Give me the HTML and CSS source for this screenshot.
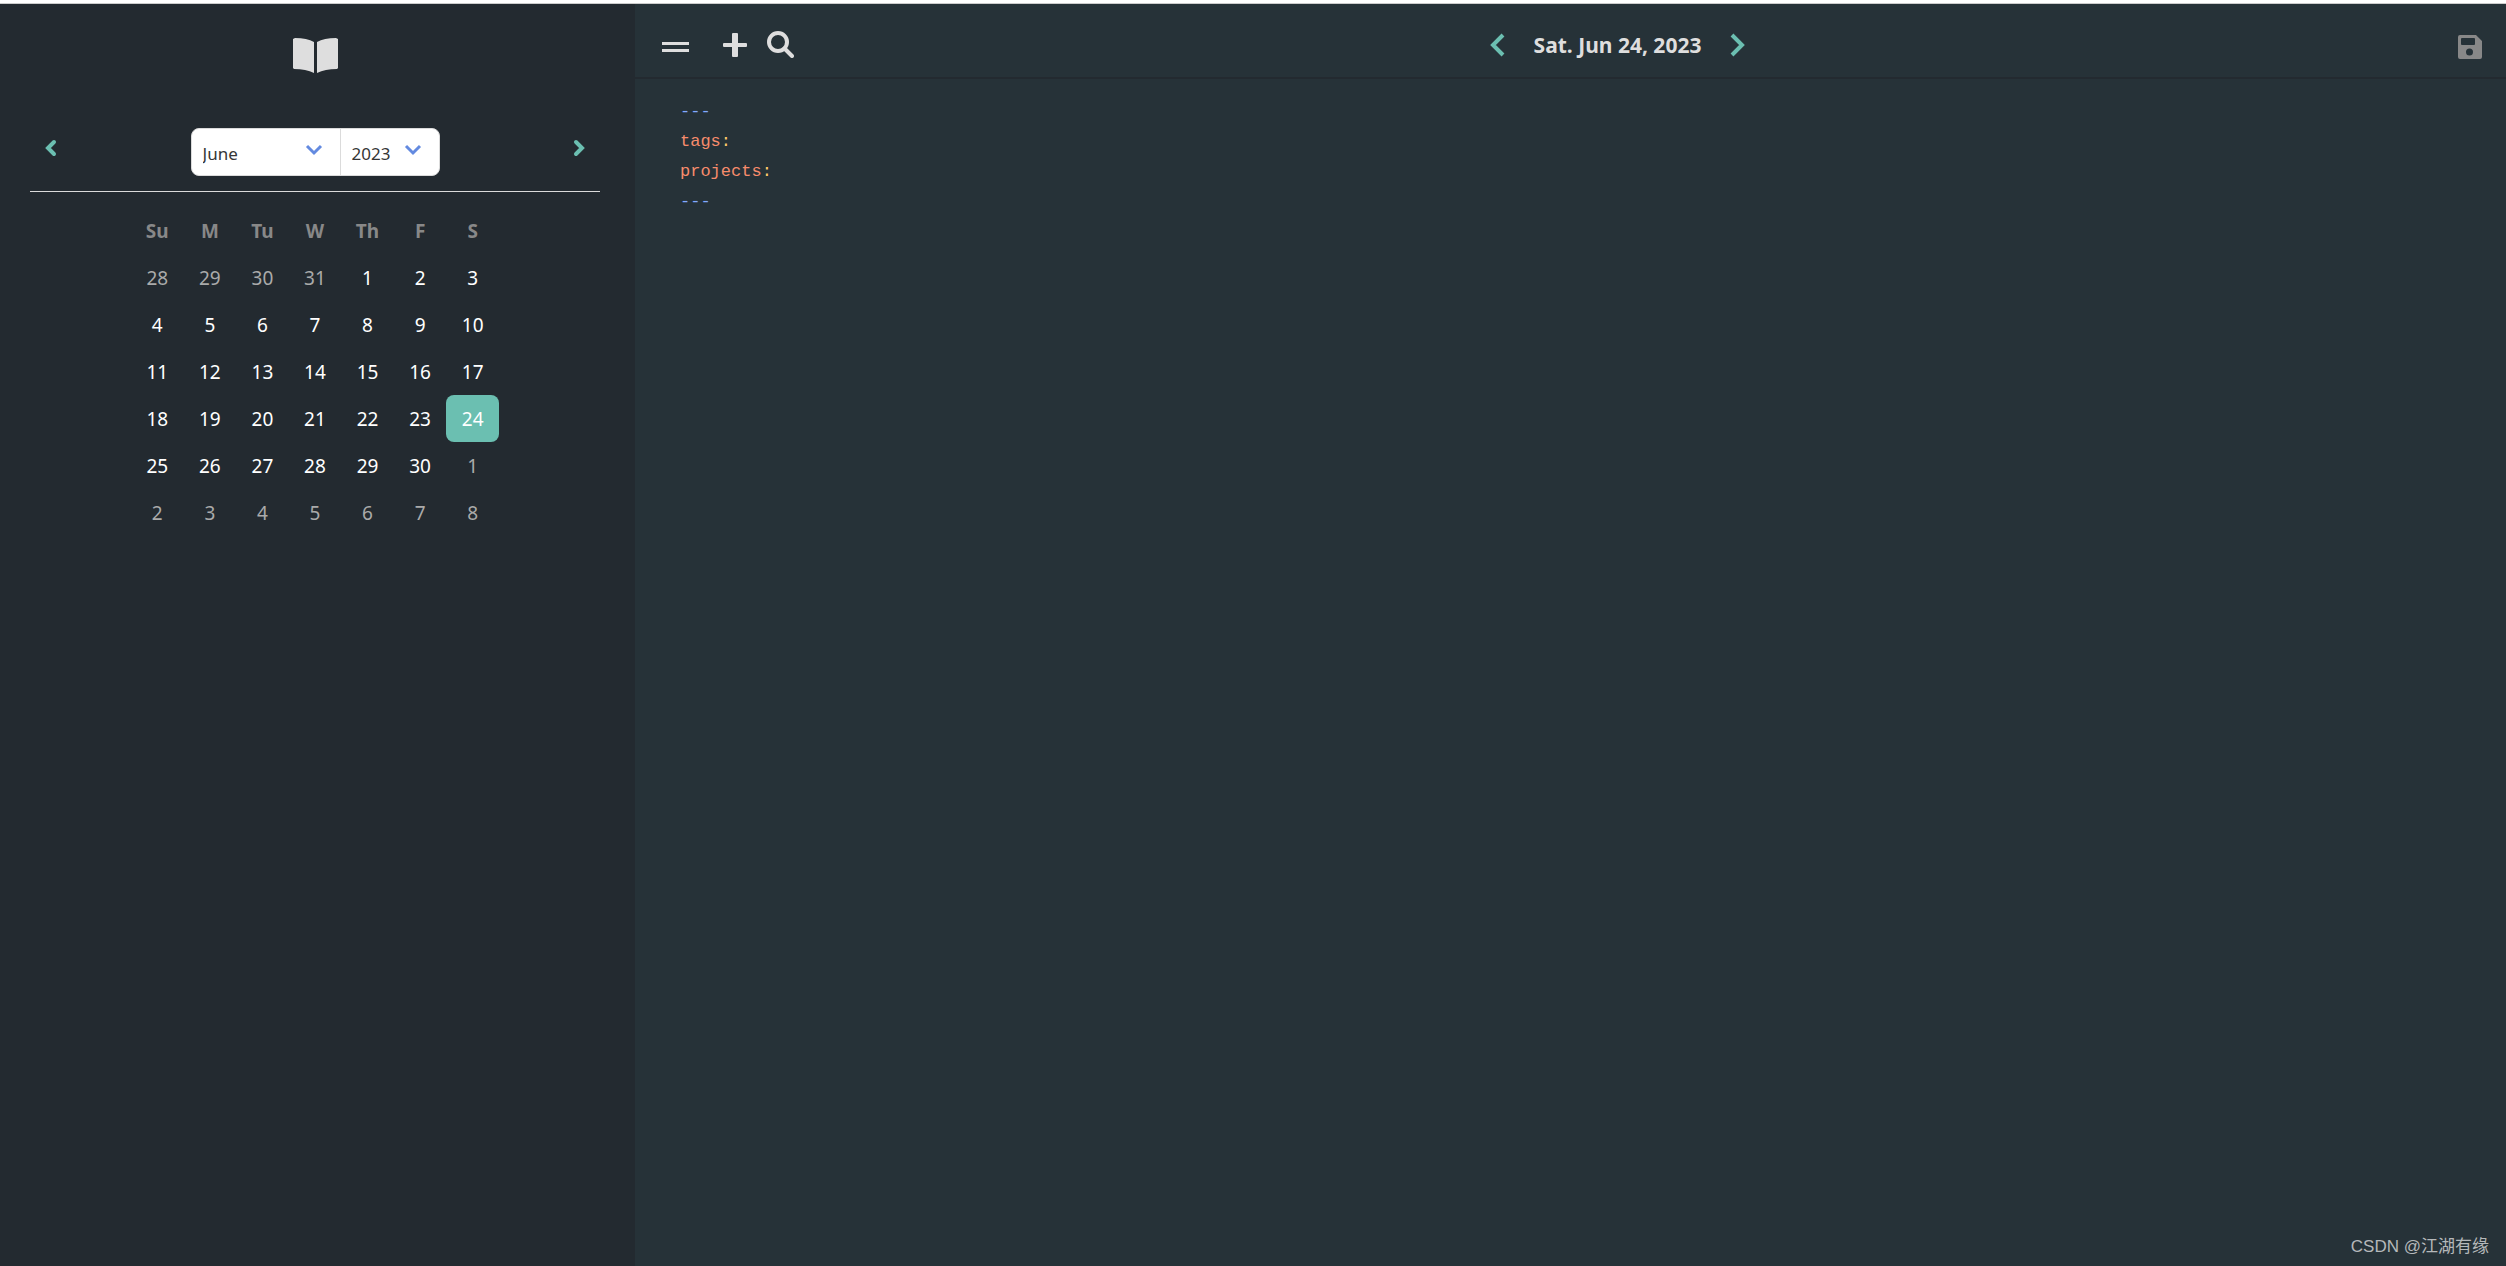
FILE: index.html
```
<!DOCTYPE html>
<html lang="en">
<head>
<meta charset="UTF-8">
<title>Daily Notes</title>
<link rel="stylesheet" href="styles.css">
</head>
<body>

<div class="app">
  <aside class="sidebar">
    <a class="logo" href="#" aria-label="Home">
      <svg width="45" height="35" viewBox="0 0 45 35"><path d="M0 1 L2 0 Q14 0 21 4 V35 Q13 31 1 31 L0 30Z M45 1 L43 0 Q31 0 24 4 V35 Q32 31 44 31 L45 30Z"/></svg>
    </a>

    <div class="month-nav">
      <button class="arrow" aria-label="Previous month">
        <svg width="12" height="20" viewBox="0 0 12 20"><path d="M9 4 L3 10 L9 16"/></svg>
      </button>
      <div class="selects">
        <div class="select month">
          <select aria-label="Month"><option>June</option></select>
          <svg width="18" height="12" viewBox="0 0 18 12"><path d="M2 2 L9 9 L16 2"/></svg>
        </div>
        <div class="select year">
          <select aria-label="Year"><option>2023</option></select>
          <svg width="18" height="12" viewBox="0 0 18 12"><path d="M2 2 L9 9 L16 2"/></svg>
        </div>
      </div>
      <button class="arrow" aria-label="Next month">
        <svg width="12" height="20" viewBox="0 0 12 20"><path d="M3 4 L9 10 L3 16"/></svg>
      </button>
    </div>

    <table class="calendar">
      <thead>
        <tr><th>Su</th><th>M</th><th>Tu</th><th>W</th><th>Th</th><th>F</th><th>S</th></tr>
      </thead>
      <tbody>
        <tr><td class="other">28</td><td class="other">29</td><td class="other">30</td><td class="other">31</td><td>1</td><td>2</td><td>3</td></tr>
        <tr><td>4</td><td>5</td><td>6</td><td>7</td><td>8</td><td>9</td><td>10</td></tr>
        <tr><td>11</td><td>12</td><td>13</td><td>14</td><td>15</td><td>16</td><td>17</td></tr>
        <tr><td>18</td><td>19</td><td>20</td><td>21</td><td>22</td><td>23</td><td class="selected">24</td></tr>
        <tr><td>25</td><td>26</td><td>27</td><td>28</td><td>29</td><td>30</td><td class="other">1</td></tr>
        <tr><td class="other">2</td><td class="other">3</td><td class="other">4</td><td class="other">5</td><td class="other">6</td><td class="other">7</td><td class="other">8</td></tr>
      </tbody>
    </table>
  </aside>

  <main class="main">
    <header class="topbar">
      <div class="tools">
        <button class="menu" aria-label="Menu">
          <svg width="27" height="10" viewBox="0 0 27 10"><path d="M0 0H27V3H0Z M0 7H27V10H0Z"/></svg>
        </button>
        <button aria-label="New note">
          <svg width="24" height="24" viewBox="0 0 24 24"><path d="M10 0h4q1 0 1 1v9h8q1 0 1 1v2q0 1-1 1h-8v9q0 1-1 1h-4q-1 0-1-1v-9H1q-1 0-1-1v-2q0-1 1-1h8V1q0-1 1-1Z"/></svg>
        </button>
        <button aria-label="Search">
          <svg width="27" height="27" viewBox="0 0 27 27"><circle class="line" cx="11" cy="11" r="9"/><path class="line" d="M17.500 17.500 L25 25"/></svg>
        </button>
      </div>
      <div class="date-nav">
        <button class="arrow" aria-label="Previous day">
          <svg width="16" height="24" viewBox="0 0 16 24"><path d="M13 2 L3 12 L13 22"/></svg>
        </button>
        <h1>Sat. Jun 24, 2023</h1>
        <button class="arrow" aria-label="Next day">
          <svg width="16" height="24" viewBox="0 0 16 24"><path d="M3 2 L13 12 L3 22"/></svg>
        </button>
      </div>
      <button class="save" aria-label="Save">
        <svg width="24" height="24" viewBox="0 0 24 24"><path fill-rule="evenodd" d="M2 0H18L24 6V22Q24 24 22 24H2Q0 24 0 22V2Q0 0 2 0Z M4 3Q3 3 3 4V9Q3 10 4 10H16Q17 10 17 9V4Q17 3 16 3Z M11.500 13.500A3.500 3.500 0 1 0 11.500 20.500A3.500 3.500 0 1 0 11.500 13.500Z"/></svg>
      </button>
    </header>
    <pre class="editor"><span class="mark">---</span>
<span class="key">tags</span><span class="colon">:</span>
<span class="key">projects</span><span class="colon">:</span>
<span class="mark">---</span></pre>
    <footer>CSDN @江湖有缘</footer>
  </main>
</div>

</body>
</html>
```
FILE: styles.css
```
* {
  box-sizing: border-box;
}
body {
  margin: 0;
  font-family: "Noto Sans", "Noto Sans CJK SC", sans-serif;
  background: #263238;
  color: #fff;
}
button {
  display: flex;
  padding: 0;
  border: 0;
  background: none;
  cursor: pointer;
}
svg {
  display: block;
}
.app {
  display: flex;
  min-height: 100vh;
  border-top: 3px solid #fff;
}
.sidebar {
  flex: 0 0 635px;
  padding: 34px 35px 0 30px;
  border-top: 1px solid #ccc;
  background: #232a30;
}
.logo {
  display: flex;
  justify-content: center;
  fill: #dedede;
}
.arrow svg {
  fill: none;
  stroke: #6bbfb1;
  stroke-width: 4;
}

/* month and year */
.month-nav {
  display: flex;
  justify-content: space-between;
  align-items: flex-start;
  height: 64px;
  margin-top: 55px;
  padding: 0 15px;
  border-bottom: 1px solid #dbdbdb;
}
.month-nav .arrow {
  margin-top: 10px;
}
.month-nav .arrow svg {
  stroke-linecap: round;
}
.selects {
  display: flex;
  height: 48px;
  border: 1px solid #dbdbdb;
  border-radius: 8px;
  background: #fff;
}
.select {
  position: relative;
}
.select select {
  width: 100%;
  height: 100%;
  padding: 2px 11px 0;
  border: 0;
  background: none;
  color: #363636;
  font: 17px "Noto Sans", sans-serif;
  appearance: none;
}
.select svg {
  position: absolute;
  top: 15px;
  right: 17px;
  fill: none;
  stroke: #638ae0;
  stroke-width: 3;
  pointer-events: none;
}
.month {
  width: 149px;
  border-right: 1px solid #dbdbdb;
}
.year {
  width: 98px;
}

/* calendar */
.calendar {
  width: 368px;
  margin: 15px auto 0;
  border-collapse: collapse;
  table-layout: fixed;
}
th, td {
  height: 47px;
  padding: 0;
  font-size: 19px;
  text-align: center;
}
th {
  color: #888;
}
.other {
  color: #aaa;
}
.selected {
  border-radius: 8px;
  background: #6bbfb1;
}

/* editor */
.main {
  flex: 1;
  display: flex;
  flex-direction: column;
  border-top: 1px solid #ccc;
}
.topbar {
  display: flex;
  justify-content: space-between;
  align-items: center;
  height: 75px;
  padding: 8px 24px 0 27px;
  border-bottom: 2px solid #232a30;
}
.tools {
  display: flex;
  align-items: center;
  gap: 20px;
  height: 50px;
  fill: #dedede;
}
.menu {
  margin: 5px 14px 0 0;
}
.line {
  fill: none;
  stroke: #dedede;
  stroke-width: 4;
  stroke-linecap: round;
}
.date-nav {
  display: flex;
  align-items: center;
  gap: 28px;
}
h1 {
  margin: 0;
  color: #dedede;
  font-size: 21px;
}
.save {
  padding: 4px 0 0 17px;
  fill: #888;
}
.editor {
  flex: 1;
  margin: 0;
  padding: 18px 45px;
  font: 17px/30px "Liberation Mono", monospace;
}
.mark {
  color: #82aaff;
}
.key {
  color: #f78c6c;
}
.colon {
  color: #ffcb6b;
}
footer {
  padding: 0 17px 6px;
  color: #b5b8ba;
  font: 17px/26px "Liberation Sans", "Noto Sans CJK SC", sans-serif;
  text-align: right;
}
```
